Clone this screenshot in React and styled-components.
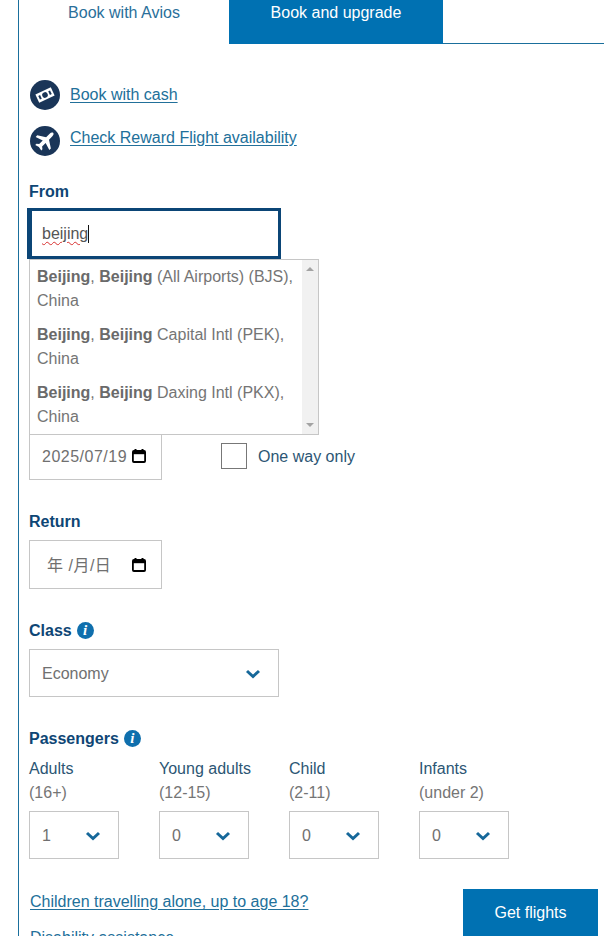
import React from "react";
import styled, { createGlobalStyle } from "styled-components";

const Global = createGlobalStyle`
  html, body { margin: 0; padding: 0; background: #fff; }
  body { font-family: "Liberation Sans", Arial, sans-serif; font-size: 16px; line-height: 24px; color: #666; }
`;
const Viewport = styled.div`
  height: 936px; overflow: hidden; padding-left: 18px; box-sizing: border-box;
`;
const Panel = styled.div`
  border-left: 1px solid #1a6f9c; min-height: 1000px;
`;
const Tabs = styled.div`
  display: flex; height: 44px;
`;
const Tab = styled.div`
  flex: 0 0 ${p => p.$w}px; text-align: center; box-sizing: border-box; padding-top: 1px;
  background: ${p => (p.$active ? "#0071b2" : "#fff")};
  color: ${p => (p.$active ? "#fff" : "#2a6f9a")};
`;
const TabRest = styled.div`
  flex: 1; border-bottom: 1px solid #1a6f9c;
`;
const Form = styled.div`
  padding: 36px 6px 0 10px;
`;
const LinkRow = styled.div`
  display: flex; align-items: flex-start; margin: 0 0 16px 1px; height: 30px;
`;
const RoundIcon = styled.svg`
  width: 30px; height: 30px; flex: none; display: block;
`;
const A = styled.a`
  color: #22709a; text-decoration: underline; text-underline-offset: 2px;
`;
const RowLink = styled(A)`
  margin-left: 10px; margin-top: ${p => p.$shift}px;
`;
const Label = styled.div`
  display: flex; align-items: center; gap: 5px;
  font-weight: 700; color: #0e4675; margin-top: ${p => p.$top ?? 30}px; margin-bottom: ${p => p.$bottom ?? 6}px;
`;
const Field = styled.div`
  position: relative;
`;
const SearchBox = styled.div`
  height: 51px; width: 254px; margin-left: -2px; box-sizing: border-box;
  border: 3px solid #0b4576; border-left-width: 5px; padding-left: 10px;
  display: flex; align-items: center; color: #555;
`;
const Typed = styled.span`
  text-decoration: underline wavy #d8302f 1px; text-underline-offset: 2px;
`;
const Caret = styled.span`
  display: inline-block; width: 1px; height: 18px; background: #111;
`;
const Dropdown = styled.div`
  position: absolute; left: 0; top: 51px; width: 290px; height: 176px; box-sizing: border-box;
  border: 1px solid #c6c6c6; background: #fff; z-index: 5; display: flex;
`;
const List = styled.div`
  flex: 1; min-width: 0;
`;
const Item = styled.div`
  padding: 5px 6px 5px 7px; color: #757575;
  b { color: #6a6a6a; }
`;
const Scrollbar = styled.div`
  flex: 0 0 16px; background: #f1f1f1; display: flex; flex-direction: column;
  justify-content: space-between; align-items: center; padding: 7px 0; box-sizing: border-box;
`;
const Arrow = styled.div`
  width: 0; height: 0; border-left: 4px solid transparent; border-right: 4px solid transparent;
  ${p => (p.$down ? "border-top: 4px solid #a3a3a3;" : "border-bottom: 4px solid #a3a3a3;")}
`;
const DateRow = styled.div`
  display: flex; align-items: center;
`;
const DateBox = styled.div`
  width: 133px; height: ${p => p.$h}px; box-sizing: border-box; border: 1px solid #c6c6c6;
  display: flex; align-items: center; justify-content: space-between;
  padding: 2px 14px 0 ${p => p.$pl}px; color: #707070; white-space: nowrap; background: #fff;
`;
const DateText = styled.span`
  letter-spacing: 0.5px;
  font-family: "Liberation Sans", "Noto Sans CJK SC", sans-serif;
`;
const CalIcon = styled.svg`
  width: 16px; height: 16px; flex: none; display: block; margin-top: -2px;
`;
const Check = styled.div`
  width: 26px; height: 26px; box-sizing: border-box; border: 1px solid #777; margin-left: 59px; background: #fff;
`;
const CheckLabel = styled.span`
  margin-left: 11px; padding-top: 2px; color: #2c5674;
`;
const InfoIcon = styled.span`
  width: 17px; height: 17px; margin-top: -2px; border-radius: 50%; background: #0f6fad; color: #fff; flex: none;
  display: flex; align-items: center; justify-content: center;
  font: italic 700 15px/17px "Liberation Serif", serif;
`;
const Select = styled.div`
  width: ${p => p.$w}px; height: 48px; box-sizing: border-box; border: 1px solid #c6c6c6;
  display: flex; align-items: center; justify-content: space-between; padding: 2px 17px 0 12px; color: #707070;
`;
const Chevron = styled.svg`
  width: 16px; height: 10px; flex: none; display: block;
`;
const PaxGrid = styled.div`
  display: grid; grid-template-columns: repeat(4, 90px); column-gap: 40px;
`;
const PaxName = styled.div`
  color: #2c5674; white-space: nowrap; padding-top: 1px;
`;
const PaxAge = styled.div`
  color: #757575; margin-bottom: 6px; white-space: nowrap;
`;
const Bottom = styled.div`
  display: flex; justify-content: space-between; align-items: flex-start; margin-top: 30px;
`;
const Links = styled.div`
  display: flex; flex-direction: column; gap: 12px; padding: 1px 0 0 1px;
`;
const Button = styled.button`
  width: 135px; height: 47px; border: 0; background: #0071b2; color: #fff;
  font: 16px/24px "Liberation Sans", Arial, sans-serif;
`;

const Down = () => (
  <Chevron viewBox="0 0 16 10">
    <path d="M2 2l6 5.5L14 2" fill="none" stroke="#16689a" strokeWidth="3" />
  </Chevron>
);
const Cal = () => (
  <CalIcon viewBox="0 0 16 16">
    <path d="M4.500 1v2M11.500 1v2" stroke="#000" strokeWidth="2" />
    <rect x="1.900" y="3" width="12.200" height="11" rx="1" fill="none" stroke="#000" strokeWidth="1.8" />
    <path d="M2 5h12" stroke="#000" strokeWidth="2.400" />
  </CalIcon>
);
const Info = () => <InfoIcon>i</InfoIcon>;

function Pax({ name, age, value }) {
  return (
    <div>
      <PaxName>{name}</PaxName>
      <PaxAge>{age}</PaxAge>
      <Select $w={90}>{value}<Down /></Select>
    </div>
  );
}

export default function App() {
  return (
    <Viewport>
      <Global />
      <Panel>
        <Tabs>
          <Tab $w={210}>Book with Avios</Tab>
          <Tab $w={214} $active>Book and upgrade</Tab>
          <TabRest />
        </Tabs>
        <Form>
          <LinkRow>
            <RoundIcon viewBox="0 0 30 30">
              <circle cx="15" cy="15" r="15" fill="#1a3558" />
              <g transform="rotate(-25 15 15)">
                <rect x="6.500" y="10.500" width="17" height="9" fill="#fff" />
                <circle cx="15" cy="15" r="2.800" fill="#1a3558" />
                <rect x="8.500" y="13" width="2" height="4" fill="#1a3558" />
                <rect x="19.500" y="13" width="2" height="4" fill="#1a3558" />
              </g>
            </RoundIcon>
            <RowLink $shift={3}>Book with cash</RowLink>
          </LinkRow>
          <LinkRow>
            <RoundIcon viewBox="0 0 30 30">
              <circle cx="15" cy="15" r="15" fill="#1a3558" />
              <g transform="rotate(45 15 15)">
                <path fill="#fff" d="M15 3.500c1.200 0 1.900 1.400 1.900 3v4.700l7.600 5v2.200l-7.600-2.400v5l2.200 1.700v1.700L15 23.600l-4.100 1.100V23l2.200-1.700v-5l-7.600 2.400v-2.200l7.600-5V6.500c0-1.600.7-3 1.900-3z" />
              </g>
            </RoundIcon>
            <RowLink $shift={0}>Check Reward Flight availability</RowLink>
          </LinkRow>

          <Field>
            <Label $top={24} $bottom={4}>From</Label>
            <Field>
              <SearchBox><Typed>beijing</Typed><Caret /></SearchBox>
              <Dropdown>
                <List>
                  <Item><b>Beijing</b>, <b>Beijing</b> (All Airports) (BJS), China</Item>
                  <Item><b>Beijing</b>, <b>Beijing</b> Capital Intl (PEK), China</Item>
                  <Item><b>Beijing</b>, <b>Beijing</b> Daxing Intl (PKX), China</Item>
                </List>
                <Scrollbar><Arrow /><Arrow $down /></Scrollbar>
              </Dropdown>
            </Field>
          </Field>

          <Label $top={149} $bottom={0}>Departure</Label>
          <DateRow>
            <DateBox $h={48} $pl={12}><DateText>2025/07/19</DateText><Cal /></DateBox>
            <Check />
            <CheckLabel>One way only</CheckLabel>
          </DateRow>

          <Label>Return</Label>
          <DateBox $h={49} $pl={17}><DateText>年 /月/日</DateText><Cal /></DateBox>

          <Label>Class <Info /></Label>
          <Select $w={250}>Economy<Down /></Select>

          <Label $bottom={5}>Passengers <Info /></Label>
          <PaxGrid>
            <Pax name="Adults" age="(16+)" value="1" />
            <Pax name="Young adults" age="(12-15)" value="0" />
            <Pax name="Child" age="(2-11)" value="0" />
            <Pax name="Infants" age="(under 2)" value="0" />
          </PaxGrid>

          <Bottom>
            <Links>
              <A>Children travelling alone, up to age 18?</A>
              <A>Disability assistance</A>
            </Links>
            <Button>Get flights</Button>
          </Bottom>
        </Form>
      </Panel>
    </Viewport>
  );
}
